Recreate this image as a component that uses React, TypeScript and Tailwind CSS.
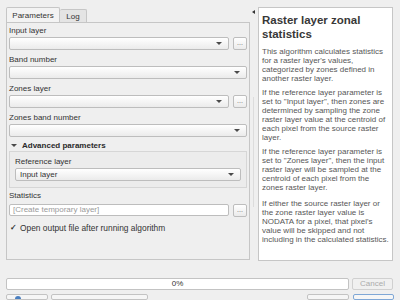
import React from "react";

function Arrow() {
  return <div className="h-0 w-0 border-x-[3px] border-t-[3px] border-x-transparent border-t-[#4a4a4a]" />;
}

function Combo({ text = "", className = "" }: { text?: string; className?: string }) {
  return (
    <div
      className={`flex h-[13px] items-center rounded-[2px] border border-[#bdbdbd] bg-linear-to-b from-[#ffffff] to-[#ebebeb] pl-[4px] pr-[6px] ${className}`}
    >
      <span className="flex-1 text-[8px] leading-[11px] text-[#333333]">{text}</span>
      <Arrow />
    </div>
  );
}

function Dots({ className = "" }: { className?: string }) {
  return (
    <div
      className={`flex h-[13px] w-[14px] items-end justify-center rounded-[2px] border border-[#bdbdbd] bg-linear-to-b from-[#ffffff] to-[#ebebeb] pb-[3px] text-[7px] leading-[7px] text-[#666] ${className}`}
    >
      ...
    </div>
  );
}

function Label({ children }: { children: React.ReactNode }) {
  return <div className="flex h-[14px] items-center pt-[2px] text-[8px] text-[#333333]">{children}</div>;
}

const para1 = [
  "This algorithm calculates statistics",
  "for a raster layer's values,",
  "categorized by zones defined in",
  "another raster layer.",
];
const para2 = [
  "If the reference layer parameter is",
  'set to "Input layer", then zones are',
  "determined by sampling the zone",
  "raster layer value at the centroid of",
  "each pixel from the source raster",
  "layer.",
];
const para3 = [
  "If the reference layer parameter is",
  'set to "Zones layer", then the input',
  "raster layer will be sampled at the",
  "centroid of each pixel from the",
  "zones raster layer.",
];
const para4 = [
  "If either the source raster layer or",
  "the zone raster layer value is",
  "NODATA for a pixel, that pixel's",
  "value will be skipped and not",
  "including in the calculated statistics.",
];

function Para({ lines, className = "" }: { lines: string[]; className?: string }) {
  return (
    <div className={`text-[8px] leading-[9px] text-[#575757] ${className}`}>
      {lines.map((l, i) => (
        <div key={i} className="whitespace-nowrap">
          {l}
        </div>
      ))}
    </div>
  );
}

export default function App() {
  return (
    <div className="flex h-[300px] w-[400px] flex-col overflow-hidden bg-[#efefef] font-['Liberation_Sans',sans-serif]">
      <div className="h-[3px] bg-[#3b3a36]" />
      <div className="flex h-[261px] pl-[6px] pt-[7px]">
        {/* left column */}
        <div className="flex w-[244px] flex-col">
          <div className="flex h-[15px] items-end">
            <div className="flex h-[15px] w-[54px] items-center justify-center rounded-t-[2px] border border-b-0 border-[#c6c6c6] bg-[#f3f3f3] pt-[1px] text-[8px] text-[#333333]">
              Parameters
            </div>
            <div className="flex h-[13px] w-[27px] items-center justify-center rounded-t-[2px] border border-b-0 border-l-0 border-[#c6c6c6] bg-[#e4e4e4] pt-[1px] text-[8px] text-[#333333]">
              Log
            </div>
          </div>
          <div className="flex h-[238px] flex-col border border-[#c6c6c6] bg-[#efefef] pl-[2px] pr-[2px]">
            <Label>Input layer</Label>
            <div className="flex gap-[4px]">
              <Combo className="flex-1" />
              <Dots />
            </div>
            <div className="h-[2px]" />
            <Label>Band number</Label>
            <Combo />
            <div className="h-[2px]" />
            <Label>Zones layer</Label>
            <div className="flex gap-[4px]">
              <Combo className="flex-1" />
              <Dots />
            </div>
            <div className="h-[2px]" />
            <Label>Zones band number</Label>
            <Combo />
            <div className="flex h-[14px] items-center gap-[5px] pl-[2px] pt-[3px]">
              <Arrow />
              <span className="text-[8px] font-bold text-[#2a2a2a]">Advanced parameters</span>
            </div>
            <div className="flex h-[37px] flex-col border border-[#d6d6d6] bg-[#ececec] pl-[5px] pr-[5px] pt-[2px]">
              <Label>Reference layer</Label>
              <Combo text="Input layer" />
            </div>
            <Label>Statistics</Label>
            <div className="mt-[2px] flex gap-[4px]">
              <div className="flex h-[12px] flex-1 items-center rounded-[2px] border border-[#bdbdbd] bg-white pl-[3px] text-[8px] text-[#9a9a9a]">
                [Create temporary layer]
              </div>
              <Dots className="h-[12px]" />
            </div>
            <div className="mt-[5px] flex h-[12px] items-center gap-[2px]">
              <span className="flex h-[9px] w-[9px] items-center justify-center text-[8px] font-bold leading-none text-[#333]">
                ✓
              </span>
              <span className="text-[8.4px] text-[#333333]">Open output file after running algorithm</span>
            </div>
          </div>
        </div>
        {/* splitter */}
        <div className="relative w-[8px]">
          <div className="absolute left-[2px] top-[3px] h-0 w-0 border-y-[2px] border-r-[3px] border-y-transparent border-r-[#333]" />
          <div className="absolute left-[3px] top-[90px] h-[110px] w-[1px] bg-[#dcdcdc]" />
        </div>
        {/* right panel */}
        <div className="flex h-[254px] w-[135px] flex-col border border-[#c6c6c6] bg-white pl-[3px] pt-[5px]">
          <div className="text-[11.5px] font-bold leading-[14px] text-[#383838]">
            <div className="whitespace-nowrap">Raster layer zonal</div>
            <div className="whitespace-nowrap">statistics</div>
          </div>
          <Para lines={para1} className="mt-[6px]" />
          <Para lines={para2} className="mt-[5px]" />
          <Para lines={para3} className="mt-[5px]" />
          <Para lines={para4} className="mt-[7px]" />
        </div>
      </div>
      {/* progress row */}
      <div className="mt-[17px] flex h-[12px] gap-[3px] px-[6px]">
        <div className="flex w-[343px] items-center justify-center rounded-[2px] border border-[#c3c3c3] bg-white text-[8px] text-[#333333]">
          0%
        </div>
        <div className="flex w-[41px] items-center justify-center rounded-[2px] border border-[#d0d0d0] bg-[#f0f0f0] text-[8px] text-[#ababab]">
          Cancel
        </div>
      </div>
      {/* button row */}
      <div className="mt-[4px] flex h-[18px] px-[6px]">
        <div className="flex w-[42px] items-start rounded-[2px] border border-[#c3c3c3] bg-[#f6f6f6] pl-[8px] pt-[1px]">
          <div className="h-[3px] w-[6px] rounded-t-full bg-[#4a7fc0]" />
        </div>
        <div className="ml-[3px] w-[97px] rounded-[2px] border border-[#c3c3c3] bg-[#f6f6f6]" />
        <div className="flex-1" />
        <div className="w-[42px] rounded-[2px] border border-[#c3c3c3] bg-[#f6f6f6]" />
        <div className="ml-[4px] w-[41px] rounded-[2px] border border-[#7fa7d6] bg-[#f6f6f6]" />
      </div>
    </div>
  );
}
